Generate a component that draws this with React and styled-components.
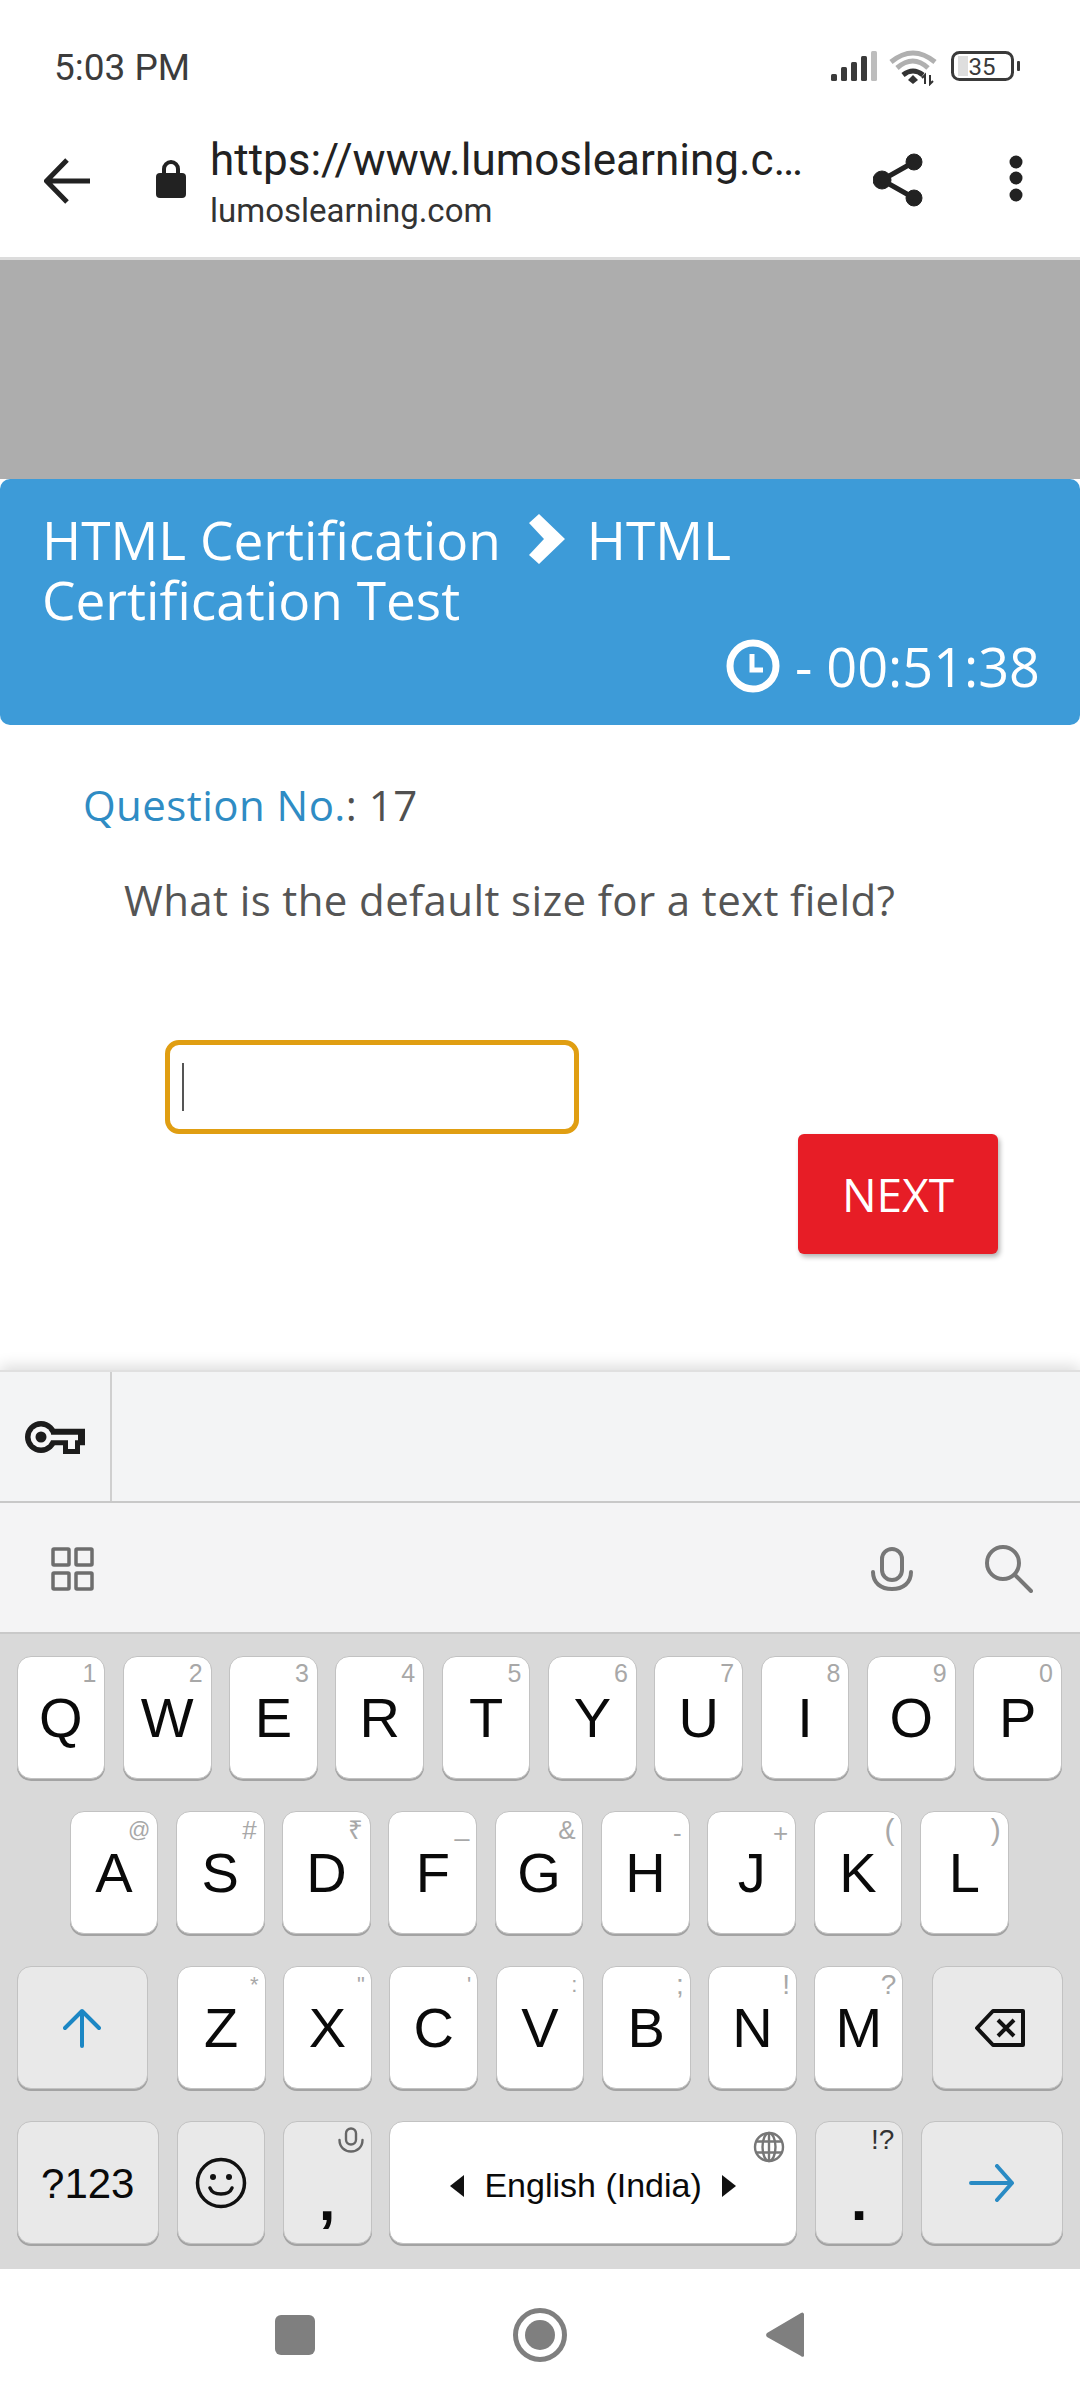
import React from "react";
import styled, { createGlobalStyle } from "styled-components";

const Global = createGlobalStyle`
  html, body { margin: 0; padding: 0; background: #fff; }
  * { box-sizing: border-box; }
`;

const Page = styled.div`
  width: 1080px;
  height: 2400px;
  display: flex;
  flex-direction: column;
  overflow: hidden;
  background: #fff;
  font-family: "Open Sans", "Liberation Sans", sans-serif;
`;

const Chrome = styled.header`
  height: 260px;
  border-bottom: 3px solid #dcdcdc;
  display: flex;
  flex-direction: column;
  font-family: Roboto, sans-serif;
`;

const StatusBar = styled.div`
  height: 125px;
  padding: 50px 59px 0 54px;
  display: flex;
  align-items: flex-start;
  justify-content: space-between;
`;

const Clock = styled.span`
  font-size: 37px;
  line-height: 35px;
  color: #3c3c3c;
`;

const Toolbar = styled.div`
  flex: 1;
  display: flex;
  align-items: flex-start;
  padding: 10px 0 0 44px;
`;

const IconBox = styled.svg`
  display: block;
  flex: none;
  margin-left: ${(p) => p.$ml || 0}px;
  margin-top: ${(p) => p.$mt || 0}px;
`;

const UrlBlock = styled.div`
  width: 620px;
  margin-left: 24px;
  display: flex;
  flex-direction: column;
`;

const Url = styled.div`
  font-size: 44px;
  line-height: 50px;
  color: #222;
  white-space: nowrap;
`;

const Domain = styled.div`
  font-size: 33px;
  line-height: 38px;
  margin-top: 7px;
  color: #333;
`;

const GrayBand = styled.div`
  height: 219px;
  background: #adadad;
`;

const Banner = styled.section`
  height: 246px;
  background: #3d9bd8;
  border-radius: 10px;
  padding: 31px 40px 0 42px;
  color: #fff;
  display: flex;
  flex-direction: column;
`;

const Crumb = styled.div`
  font-size: 53.2px;
  line-height: 60px;
  width: 800px;
`;

const ChevronIcon = styled.svg`
  display: inline-block;
  width: 36px;
  height: 50px;
  margin: 0 22px 0 28px;
  vertical-align: -4px;
`;

const Timer = styled.div`
  margin-top: 6px;
  display: flex;
  justify-content: flex-end;
  align-items: center;
  gap: 15px;
  font-size: 54px;
  line-height: 60px;
`;

const Content = styled.main`
  flex: 1;
  display: flex;
  flex-direction: column;
  padding: 52px 82px 0 83px;
`;

const QuestionNo = styled.div`
  font-size: 42px;
  line-height: 56px;
  letter-spacing: 0.45px;
  color: #505050;
`;

const QuestionLabel = styled.span`
  color: #2f8cc4;
`;

const QuestionText = styled.div`
  margin: 38px 0 0 41px;
  font-size: 42px;
  line-height: 58px;
  letter-spacing: 0.38px;
  color: #555;
  white-space: nowrap;
`;

const Field = styled.div`
  margin: 111px 0 0 82px;
  width: 414px;
  height: 94px;
  border: 5px solid #e09e12;
  border-radius: 14px;
  padding: 18px 0 0 12px;
`;

const Caret = styled.div`
  width: 2px;
  height: 48px;
  background: #555;
`;

const NextRow = styled.div`
  display: flex;
  justify-content: flex-end;
`;

const NextButton = styled.button`
  width: 200px;
  height: 120px;
  border: 0;
  border-radius: 6px;
  background: #e71d26;
  color: #fff;
  font-family: "Open Sans", sans-serif;
  font-size: 46px;
  box-shadow: 2px 3px 5px rgba(0, 0, 0, 0.3);
`;

const Keyboard = styled.section`
  flex: none;
  display: flex;
  flex-direction: column;
  box-shadow: 0 -4px 14px rgba(0, 0, 0, 0.14);
  position: relative;
`;

const PasswordBar = styled.div`
  height: 133px;
  display: flex;
  align-items: center;
  background: #f3f4f5;
  border-top: 2px solid #e0e0e0;
  border-bottom: 2px solid #c8c8c8;
`;

const KeyCell = styled.div`
  width: 112px;
  height: 100%;
  border-right: 2px solid #cfcfcf;
  padding: 49px 0 0 25px;
`;

const ToolRow = styled.div`
  height: 131px;
  background: #f4f4f5;
  border-bottom: 2px solid #c9c9c9;
  display: flex;
  align-items: center;
  padding: 3px 47px 0 50px;
`;

const Spacer = styled.div`
  flex: 1;
`;

const KeyArea = styled.div`
  height: 635px;
  background: #d9d9d9;
  padding: 22px 16.5px 0;
  display: flex;
  flex-direction: column;
  gap: 32px;
`;

const KeyRow = styled.div`
  display: flex;
  height: 123px;
  gap: 17.5px;
  padding: 0 ${(p) => p.$inset || 0}px;
  justify-content: ${(p) => (p.$between ? "space-between" : "flex-start")};
`;

const Letters = styled.div`
  display: flex;
  gap: 17.5px;
`;

const Key = styled.div`
  position: relative;
  flex: none;
  width: ${(p) => p.$w || 88.8}px;
  height: 123px;
  border-radius: 14px;
  border: 1px solid #c2c2c2;
  background: ${(p) => (p.$special ? "#e9e9e9" : "#fff")};
  box-shadow: 0 2px 0 #a3a3a3;
  display: flex;
  align-items: center;
  justify-content: center;
  font-family: "Liberation Sans", Arial, sans-serif;
  font-size: ${(p) => p.$size || 56}px;
  color: #0a0a0a;
`;

const Hint = styled.span`
  position: absolute;
  top: ${(p) => p.$top ?? 2}px;
  right: ${(p) => p.$right ?? 8}px;
  font-size: ${(p) => p.$size || 25}px;
  line-height: 28px;
  color: ${(p) => p.$color || "#a8a8a8"};
`;

const Corner = styled.span`
  position: absolute;
  top: ${(p) => p.$top}px;
  right: ${(p) => p.$right}px;
  display: block;
  line-height: 0;
`;

const SpaceLabel = styled.span`
  display: flex;
  align-items: center;
  gap: 20px;
  font-size: 34px;
  margin-top: 6px;
`;

const NumLabel = styled.span`
  margin-top: 3px;
`;

const Punct = styled.span`
  font-weight: 700;
  font-size: 60px;
  line-height: 60px;
  margin-top: ${(p) => p.$mt}px;
`;

const NavBar = styled.nav`
  height: 131px;
  display: flex;
  align-items: center;
  justify-content: center;
  padding-right: 1px;
  background: #fff;
`;

const NavSquare = styled.div`
  width: 40px;
  height: 40px;
  border-radius: 6px;
  background: #7f7f7f;
`;

const Row1 = [["Q","1"],["W","2"],["E","3"],["R","4"],["T","5"],["Y","6"],["U","7"],["I","8"],["O","9"],["P","0"]];
const Row2 = [
  ["A","@",4,22],["S","#",4,26],["D","₹",4,26],["F","_",1,26],["G","&",4,26],
  ["H","-",7,26],["J","+",7,26],["K","(",4,30],["L",")",4,30],
];
const Row3 = [["Z","*"],["X","\""],["C","'"],["V",":"],["B",";"],["N","!"],["M","?"]];

const MicSmall = () => (
  <svg width="28" height="26" viewBox="0 0 28 26" fill="none" stroke="#666" strokeWidth="2.4" strokeLinecap="round">
    <rect x="9" y="1.5" width="10" height="16" rx="5" />
    <path d="M2.5 13c0 7 5 11.500 11.500 11.500S25.500 20 25.500 13" />
  </svg>
);

const Globe = () => (
  <svg width="32" height="32" viewBox="0 0 32 32" fill="none" stroke="#777" strokeWidth="2.400">
    <circle cx="16" cy="16" r="14" />
    <ellipse cx="16" cy="16" rx="6.500" ry="14" />
    <path d="M16 2v28M3 10.500h26M3 21.500h26" />
  </svg>
);

export default function App() {
  return (
    <Page>
      <Global />
      <Chrome>
        <StatusBar>
          <Clock>5:03 PM</Clock>
          <IconBox width="196" height="36" viewBox="0 0 196 36">
            <g fill="#3a3a3a">
              <rect x="6" y="24" width="6" height="7" rx="1.500" />
              <rect x="16" y="17" width="6" height="14" rx="1.500" />
              <rect x="26" y="12" width="6" height="19" rx="1.500" />
              <rect x="36" y="6" width="6" height="25" rx="1.500" />
            </g>
            <rect x="46" y="1" width="6" height="30" rx="1.500" fill="#bdbdbd" />
            <path d="M66 12 Q88 -6 110 12" fill="none" stroke="#b0b0b0" strokeWidth="5" />
            <path d="M72 18 Q88 4 103 18" fill="none" stroke="#b0b0b0" strokeWidth="5" />
            <path d="M78 25 Q88 17 98 25" fill="none" stroke="#333" strokeWidth="5" />
            <path d="M88 25l5 5-5 4-5-4z" fill="#333" />
            <path d="M100 34v-9l-3 3M105 25v9l3-3" fill="none" stroke="#333" strokeWidth="2" />
            <rect x="127.500" y="2.500" width="60" height="27" rx="7" fill="none" stroke="#3a3a3a" strokeWidth="3" />
            <rect x="133" y="6" width="10" height="20" fill="#dedede" />
            <text x="157" y="25" textAnchor="middle" fontFamily="Roboto, sans-serif" fontSize="24" fill="#3a3a3a">35</text>
            <rect x="192" y="11" width="3" height="10" rx="1" fill="#3a3a3a" />
          </IconBox>
        </StatusBar>
        <Toolbar>
          <IconBox width="46" height="46" viewBox="0 0 46 46" $mt="23" fill="none" stroke="#222" strokeWidth="5">
            <path d="M46 23H4M23 2 2.500 23 23 44" />
          </IconBox>
          <IconBox width="30" height="40" viewBox="0 0 30 40" $ml="66" $mt="24">
            <path d="M8 16V10a7 7 0 0 1 14 0v6" fill="none" stroke="#222" strokeWidth="4" />
            <rect x="0" y="14" width="30" height="25" rx="4" fill="#222" />
          </IconBox>
          <UrlBlock>
            <Url>https://www.lumoslearning.c…</Url>
            <Domain>lumoslearning.com</Domain>
          </UrlBlock>
          <IconBox width="50" height="54" viewBox="0 0 50 54" $ml="43" $mt="18" fill="#222" stroke="#222">
            <circle cx="41" cy="9" r="8" />
            <circle cx="9" cy="27" r="9" />
            <circle cx="41" cy="45" r="8" />
            <path d="M41 9 9 27l32 18" fill="none" strokeWidth="5" />
          </IconBox>
          <IconBox width="14" height="48" viewBox="0 0 14 48" $ml="86" $mt="20" fill="#222">
            <circle cx="7" cy="7" r="6.500" />
            <circle cx="7" cy="23" r="6.500" />
            <circle cx="7" cy="40" r="6.500" />
          </IconBox>
        </Toolbar>
      </Chrome>
      <GrayBand />
      <Banner>
        <Crumb>
          HTML Certification
          <ChevronIcon viewBox="0 0 36 50">
            <path d="M0 9 10 0l26 25-26 25-10-9 15-16z" fill="#fff" />
          </ChevronIcon>
          HTML Certification Test
        </Crumb>
        <Timer>
          <svg width="54" height="54" viewBox="0 0 54 54" fill="none" stroke="#fff" strokeWidth="7">
            <circle cx="27" cy="27" r="23" />
            <path d="M26 15v16h11" strokeWidth="5" />
          </svg>
          <span>- 00:51:38</span>
        </Timer>
      </Banner>
      <Content>
        <QuestionNo>
          <QuestionLabel>Question No.</QuestionLabel>: 17
        </QuestionNo>
        <QuestionText>What is the default size for a text field?</QuestionText>
        <Field>
          <Caret />
        </Field>
        <NextRow>
          <NextButton>NEXT</NextButton>
        </NextRow>
      </Content>
      <Keyboard>
        <PasswordBar>
          <KeyCell>
            <svg width="62" height="34" viewBox="0 0 62 34">
              <circle cx="16" cy="16" r="16" fill="#1c1c1c" />
              <path d="M26 7.700h34v16.600h-5v8.700H38v-8.700H26z" fill="#1c1c1c" />
              <circle cx="16" cy="16" r="10.500" fill="#f7f7f8" />
              <path d="M24 13.700h29v5.600h-3V28h-7v-8.700H24z" fill="#f7f7f8" />
              <circle cx="16" cy="16" r="5.500" fill="#1c1c1c" />
            </svg>
          </KeyCell>
        </PasswordBar>
        <ToolRow>
          <svg width="44" height="44" viewBox="0 0 44 44" fill="none" stroke="#6d6d6d" strokeWidth="3.500" style={{ marginLeft: 1 }}>
            <rect x="2" y="2" width="16" height="16" rx="1" />
            <rect x="25" y="2" width="16" height="16" rx="1" />
            <rect x="2" y="26" width="16" height="16" rx="1" />
            <rect x="25" y="26" width="16" height="16" rx="1" />
          </svg>
          <Spacer />
          <svg width="42" height="44" viewBox="0 0 42 44" fill="none" stroke="#777" strokeWidth="4" strokeLinecap="round">
            <rect x="11" y="2" width="20" height="31" rx="10" />
            <path d="M2 25c0 11 8 17 19 17s19-6 19-17" />
          </svg>
          <svg width="48" height="48" viewBox="0 0 48 48" fill="none" stroke="#777" strokeWidth="4" strokeLinecap="round" style={{ marginLeft: 72 }}>
            <circle cx="18" cy="18" r="16" />
            <path d="M30 30l16 16" />
          </svg>
        </ToolRow>
        <KeyArea>
          <KeyRow>
            {Row1.map(([l, h]) => (
              <Key key={l}>{l}<Hint>{h}</Hint></Key>
            ))}
          </KeyRow>
          <KeyRow $inset="53">
            {Row2.map(([l, h, top, size]) => (
              <Key key={l}>{l}<Hint $top={top} $right={7} $size={size}>{h}</Hint></Key>
            ))}
          </KeyRow>
          <KeyRow $between>
            <Key $w="131.5" $special>
              <svg width="38" height="40" viewBox="0 0 38 40" fill="none" stroke="#1c87c4" strokeWidth="4" strokeLinecap="round" strokeLinejoin="round">
                <path d="M19 38V3M2 20 19 3l17 17" />
              </svg>
            </Key>
            <Letters>
              {Row3.map(([l, h]) => (
                <Key key={l}>{l}<Hint $top={4} $right={6} $size={h === "?" || h === "!" || h === ";" ? 28 : 22}>{h}</Hint></Key>
              ))}
            </Letters>
            <Key $w="131.5" $special>
              <svg width="52" height="38" viewBox="0 0 52 38" fill="none" stroke="#111" strokeWidth="4" strokeLinejoin="round" style={{ marginLeft: 4 }}>
                <path d="M3 19 19 2h30v34H19z" />
                <path d="M24 11l16 16M40 11 24 27" />
              </svg>
            </Key>
          </KeyRow>
          <KeyRow>
            <Key $w="142.5" $special $size="42"><NumLabel>?123</NumLabel></Key>
            <Key $special>
              <svg width="52" height="52" viewBox="0 0 52 52" fill="none" stroke="#111" strokeWidth="3.500">
                <circle cx="26" cy="26" r="23.500" />
                <circle cx="18" cy="20" r="3" fill="#111" stroke="none" />
                <circle cx="34" cy="20" r="3" fill="#111" stroke="none" />
                <path d="M15 31c3 8 19 8 22 0" strokeLinecap="round" />
              </svg>
            </Key>
            <Key $special>
              <Punct $mt="34">,</Punct>
              <Corner $top="5" $right="6"><MicSmall /></Corner>
            </Key>
            <Key $w="408">
              <SpaceLabel>
                <svg width="14" height="22" viewBox="0 0 14 22" fill="#111"><path d="M14 0v22L0 11z" /></svg>
                English (India)
                <svg width="14" height="22" viewBox="0 0 14 22" fill="#111"><path d="M0 0v22l14-11z" /></svg>
              </SpaceLabel>
              <Corner $top="9" $right="11"><Globe /></Corner>
            </Key>
            <Key $special>
              <Punct $mt="34">.</Punct>
              <Hint $top={4} $right={8} $size={28} $color="#333">!?</Hint>
            </Key>
            <Key $w="142" $special>
              <svg width="46" height="38" viewBox="0 0 46 38" fill="none" stroke="#2a8bc4" strokeWidth="4" strokeLinecap="round" strokeLinejoin="round">
                <path d="M2 19h41M28 2l15 17-15 17" />
              </svg>
            </Key>
          </KeyRow>
        </KeyArea>
        <NavBar>
          <NavSquare />
          <svg width="54" height="54" viewBox="0 0 54 54" style={{ marginLeft: 198 }}>
            <circle cx="27" cy="27" r="24.500" fill="none" stroke="#7f7f7f" strokeWidth="5" />
            <circle cx="27" cy="27" r="15" fill="#7f7f7f" />
          </svg>
          <svg width="38" height="46" viewBox="0 0 38 46" style={{ marginLeft: 199 }}>
            <path d="M38 2v42a2 2 0 0 1-3 0L1 25a3 3 0 0 1 0-4L35 1a2 2 0 0 1 3 1z" fill="#7f7f7f" />
          </svg>
        </NavBar>
      </Keyboard>
    </Page>
  );
}
